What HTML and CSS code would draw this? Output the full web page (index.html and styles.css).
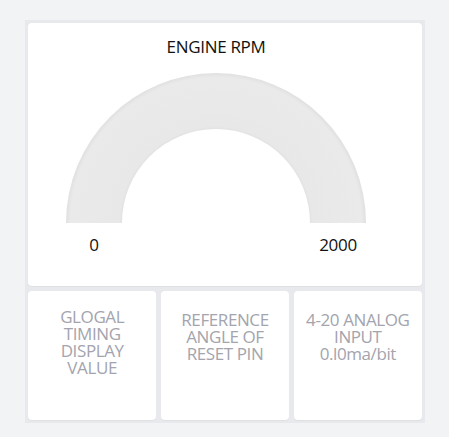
FILE: index.html
```html
<!DOCTYPE html>
<html>
<head>
<meta charset="utf-8">
<link rel="stylesheet" href="styles.css">
</head>
<body>
<div class="panel">
  <div class="card gauge-card">
    <div class="gauge-wrap">
      <div class="title">ENGINE RPM</div>
      <svg class="gauge" width="300" height="150" viewBox="0 0 300 150">
        <defs>
          <radialGradient id="g" cx="150" cy="150" r="150" gradientUnits="userSpaceOnUse">
            <stop offset="0.62" stop-color="#e2e1e2"/>
            <stop offset="0.645" stop-color="#e9e8e9"/>
            <stop offset="0.97" stop-color="#ebeaeb"/>
            <stop offset="1" stop-color="#e1e0e1"/>
          </radialGradient>
        </defs>
        <path d="M0 150 A150 150 0 0 1 300 150 L244 150 A94 94 0 0 0 56 150 Z" fill="url(#g)"/>
      </svg>
      <div class="labels">
        <span class="lab">0</span>
        <span class="lab">2000</span>
      </div>
    </div>
  </div>
  <div class="row">
    <div class="card small first"><div class="txt">GLOGAL<br>TIMING<br>DISPLAY<br>VALUE</div></div>
    <div class="card small"><div class="txt">REFERENCE<br>ANGLE OF<br>RESET PIN</div></div>
    <div class="card small"><div class="txt">4-20 ANALOG<br>INPUT<br>0.l0ma/bit</div></div>
  </div>
</div>
</body>
</html>
```
FILE: styles.css
```css
html, body { margin: 0; padding: 0; }
body {
  background: #f2f3f5;
  font-family: "Open Sans", "Noto Sans", sans-serif;
  padding: 20px 24px 14px 25px;
}
.panel {
  width: 394px;
  background: #e8e9ec;
  padding: 3px;
}
.card {
  background: #fff;
  border-radius: 4px;
  box-shadow: 0 1px 0 #dfe0e3;
}
.gauge-card {
  height: 263px;
}
.gauge-wrap {
  width: 300px;
  margin-left: 38px;
  padding-top: 13px;
}
.title {
  text-align: center;
  font-size: 17px;
  line-height: 22px;
  color: #111;
  letter-spacing: -0.3px;
}
.gauge {
  display: block;
  margin-top: 15px;
}
.labels {
  display: flex;
  justify-content: space-between;
  margin-top: 11px;
}
.lab {
  width: 56px;
  text-align: center;
  font-size: 17px;
  line-height: 22px;
  color: #111;
  letter-spacing: -0.3px;
}
.row {
  display: grid;
  grid-template-columns: 1fr 1fr 1fr;
  gap: 4.5px;
  margin-top: 5px;
}
.small {
  height: 129px;
  padding-top: 20px;
  box-sizing: border-box;
}
.small.first { padding-top: 17px; }
.txt {
  text-align: center;
  font-size: 17px;
  line-height: 17px;
  color: #a3a4ad;
  letter-spacing: -0.4px;
}
```
